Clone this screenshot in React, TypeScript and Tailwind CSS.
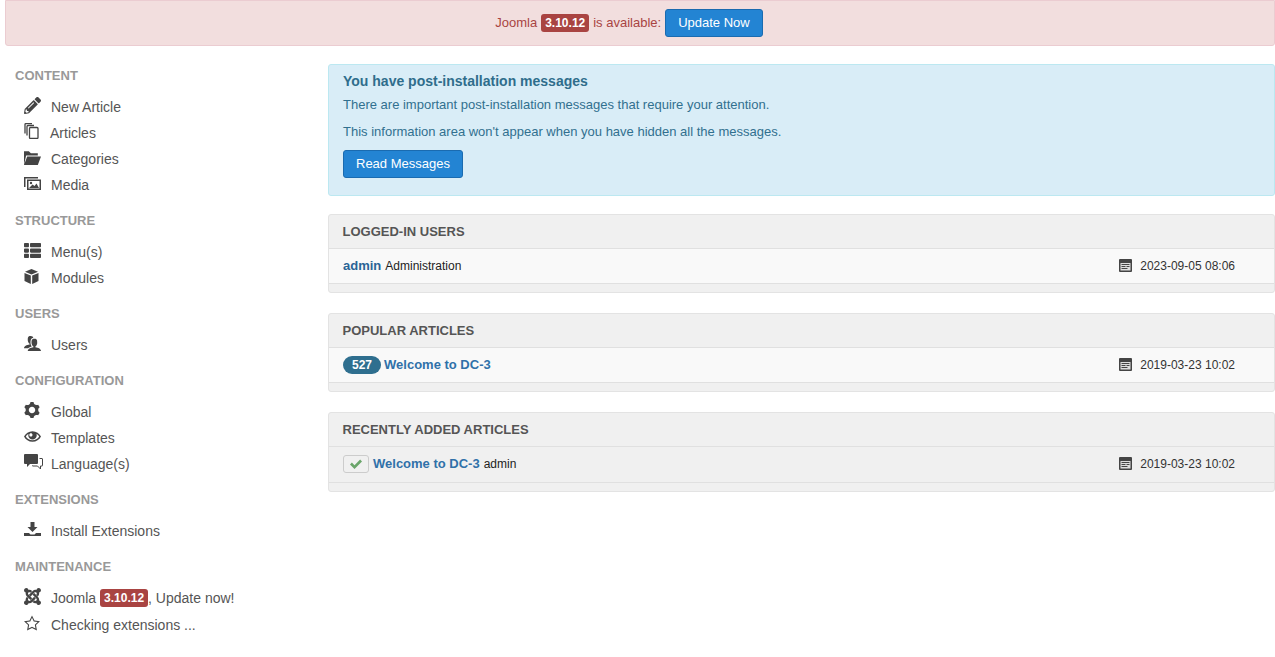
import type { ReactNode } from "react";
import { FaPencilAlt, FaThList } from "react-icons/fa";
import { ImCheckmark, ImCog, ImEye, ImFolderOpen, ImJoomla, ImStarEmpty, ImUsers } from "react-icons/im";

function CopiesIcon() {
  return (
    <svg width="15" height="16" viewBox="0 0 15 16" fill="none" stroke="currentColor" strokeWidth="1.3">
      <path d="M1 10.5V1.5a1 1 0 0 1 1-1h6" />
      <path d="M3 12.5V3.5a1 1 0 0 1 1-1h6" />
      <rect x="5.5" y="4.5" width="8.5" height="11" rx="1" />
    </svg>
  );
}

function MediaIcon() {
  return (
    <svg width="17" height="13" viewBox="0 0 17 13" fill="currentColor">
      <path d="M0 0h14v1.5H1.5V10H0z" />
      <path d="M3 2.5h14V13H3zm1.5 1.5v7.5h11V4z" fillRule="evenodd" />
      <circle cx="7" cy="6" r="1.2" />
      <path d="M5 11l3.5-3.5 2 1.5 2-2.5 2.5 4.500z" />
    </svg>
  );
}

function CubeIcon() {
  return (
    <svg width="15" height="15" viewBox="0 0 15 15" fill="currentColor">
      <path d="M7.500 0l6.500 2.800-6.500 2.700L1 2.800z" />
      <path d="M0.500 4l6.300 2.600V15L0.500 12z" />
      <path d="M14.500 4L8.200 6.600V15l6.300-3z" />
    </svg>
  );
}

function BubblesIcon() {
  return (
    <svg width="19" height="16" viewBox="0 0 19 16" fill="currentColor">
      <path d="M1 0h12a1 1 0 0 1 1 1v8a1 1 0 0 1-1 1H6l-3 3v-3H1a1 1 0 0 1-1-1V1a1 1 0 0 1 1-1z" />
      <path d="M15.500 4.500H18a.5.5 0 0 1 .5.5v6.500a.5.5 0 0 1-.5.5h-1.500v3l-3-3H8.500v-.5" fill="none" stroke="currentColor" />
    </svg>
  );
}

function InstallIcon() {
  return (
    <svg width="17" height="14" viewBox="0 0 17 14" fill="currentColor">
      <path d="M6.500 0h4v5h3l-5 5-5-5h3z" />
      <path d="M0 11h5l1.500 1.500h4L12 11h5v3H0z" />
    </svg>
  );
}

function CalendarIcon() {
  return (
    <svg width="13" height="13" viewBox="0 0 13 13" className="shrink-0 -translate-y-px">
      <rect width="13" height="13" rx="1" fill="#444" />
      <rect x="1.500" y="4" width="10" height="7.500" fill="#ddd" />
      <path d="M2.500 5.500h8M2.500 7.500h4M7.500 7.500h3M2.500 9.500h6" stroke="#444" strokeWidth="1" />
    </svg>
  );
}

const sections: {
  title: string;
  items: { icon: ReactNode; label: ReactNode; narrow?: boolean; tall?: boolean }[];
}[] = [
  {
    title: "CONTENT",
    items: [
      { icon: <FaPencilAlt size={17} />, label: "New Article" },
      { icon: <CopiesIcon />, label: "Articles", narrow: true },
      { icon: <ImFolderOpen size={17} />, label: "Categories" },
      { icon: <MediaIcon />, label: "Media" },
    ],
  },
  {
    title: "STRUCTURE",
    items: [
      { icon: <FaThList size={17} />, label: "Menu(s)" },
      { icon: <CubeIcon />, label: "Modules" },
    ],
  },
  { title: "USERS", items: [{ icon: <ImUsers size={17} />, label: "Users" }] },
  {
    title: "CONFIGURATION",
    items: [
      { icon: <ImCog size={16} />, label: "Global" },
      { icon: <ImEye size={17} />, label: "Templates" },
      { icon: <BubblesIcon />, label: "Language(s)" },
    ],
  },
  { title: "EXTENSIONS", items: [{ icon: <InstallIcon />, label: "Install Extensions" }] },
  {
    title: "MAINTENANCE",
    items: [
      {
        icon: <ImJoomla size={17} />,
        label: (
          <>
            Joomla <VersionLabel />, Update now!
          </>
        ),
      },
      { icon: <ImStarEmpty size={16} />, label: "Checking extensions ...", tall: true },
    ],
  },
];

function VersionLabel() {
  return (
    <span className="inline-block rounded-[3px] bg-[#a94442] px-1 text-[12px] leading-[18px] font-bold text-white align-[1px]">
      3.10.12
    </span>
  );
}

function Panel({ title, date, last, children }: { title: string; date: string; last?: boolean; children: ReactNode }) {
  return (
    <section className="rounded-[3px] border border-[#e3e3e3] bg-[#f0f0f0]">
      <h2 className="h-[33px] px-[13.5px] text-[13px] leading-[33px] font-bold text-[#555]">{title}</h2>
      <div
        className={`flex items-center justify-between border-y border-[#e0e0e0] pl-[14px] pr-[39px] text-[12px] text-[#222] ${
          last ? "h-[37px] bg-[#f0f0f0] pb-px" : "h-[36px] bg-[#f9f9f9]"
        }`}
      >
        <div className="flex items-center">{children}</div>
        <div className="flex items-center gap-[8px] text-[#333]">
          <CalendarIcon />
          {date}
        </div>
      </div>
      <div className="h-2" />
    </section>
  );
}

export default function App() {
  return (
    <div className="min-h-[657px] bg-white font-['Liberation_Sans',Arial,sans-serif] text-[14px] text-[#555]">
      <div className="ml-[5px] flex h-[46px] items-center justify-center gap-1 rounded-b-[3px] border border-[#ebccd1] bg-[#f2dede] pr-[22px] text-[13px] text-[#a94442]">
        <span>Joomla</span>
        <VersionLabel />
        <span>is available:</span>
        <button className="h-[28px] rounded-[3px] border border-[#1a6bb0] bg-[#2384d3] px-3 text-[13px] text-white">
          Update Now
        </button>
      </div>

      <div className="flex">
        <aside className="w-[328px] shrink-0 pl-[15px] pt-[22px]">
          {sections.map((s) => (
            <div key={s.title} className="mb-[15px]">
              <h3 className="mb-[10px] text-[13px] leading-[16px] font-bold text-[#999]">{s.title}</h3>
              <ul>
                {s.items.map((item, i) => (
                  <li
                    key={i}
                    className={`flex items-center pl-[9px] text-[14px] ${item.tall ? "h-[28px]" : "h-[26px]"}`}
                  >
                    <span className={`flex shrink-0 -translate-y-[2px] text-[#444] ${item.narrow ? "w-[26px]" : "w-[27px]"}`}>
                      {item.icon}
                    </span>
                    <span>{item.label}</span>
                  </li>
                ))}
              </ul>
            </div>
          ))}
        </aside>

        <main className="min-w-0 flex-1 pt-[18px]">
          <div className="mb-[18px] h-[132px] rounded-[3px] border border-[#bce8f1] bg-[#d9edf7] px-[14px] pt-[8px] text-[13px] text-[#31708f]">
            <h4 className="text-[14px] leading-[17px] font-bold text-[#2f6d8c]">You have post-installation messages</h4>
            <p className="mt-[6px] leading-[18px]">There are important post-installation messages that require your attention.</p>
            <p className="mt-[9px] leading-[18px]">This information area won't appear when you have hidden all the messages.</p>
            <button className="mt-[9px] h-[28px] rounded-[3px] border border-[#1a6bb0] bg-[#2384d3] px-3 text-[13px] text-white">
              Read Messages
            </button>
          </div>

          <div className="flex flex-col gap-[20px]">
            <Panel title="LOGGED-IN USERS" date="2023-09-05 08:06">
              <a className="text-[13px] font-bold text-[#2a6496]">admin</a>
              <span className="ml-1">Administration</span>
            </Panel>
            <Panel title="POPULAR ARTICLES" date="2019-03-23 10:02">
              <span className="rounded-full bg-[#2f6f8f] px-[9px] text-[12px] leading-[18px] font-bold text-white">527</span>
              <a className="ml-[3px] text-[13px] font-bold text-[#3071a9]">Welcome to DC-3</a>
            </Panel>
            <Panel title="RECENTLY ADDED ARTICLES" date="2019-03-23 10:02" last>
              <span className="flex h-[18px] w-[26px] items-center justify-center rounded-[3px] border border-[#ccc] bg-[#f0f0f0] text-[#6aa56a]">
                <ImCheckmark size={12} />
              </span>
              <a className="ml-1 text-[13px] font-bold text-[#3071a9]">Welcome to DC-3</a>
              <span className="ml-1">admin</span>
            </Panel>
          </div>
        </main>
      </div>
    </div>
  );
}
